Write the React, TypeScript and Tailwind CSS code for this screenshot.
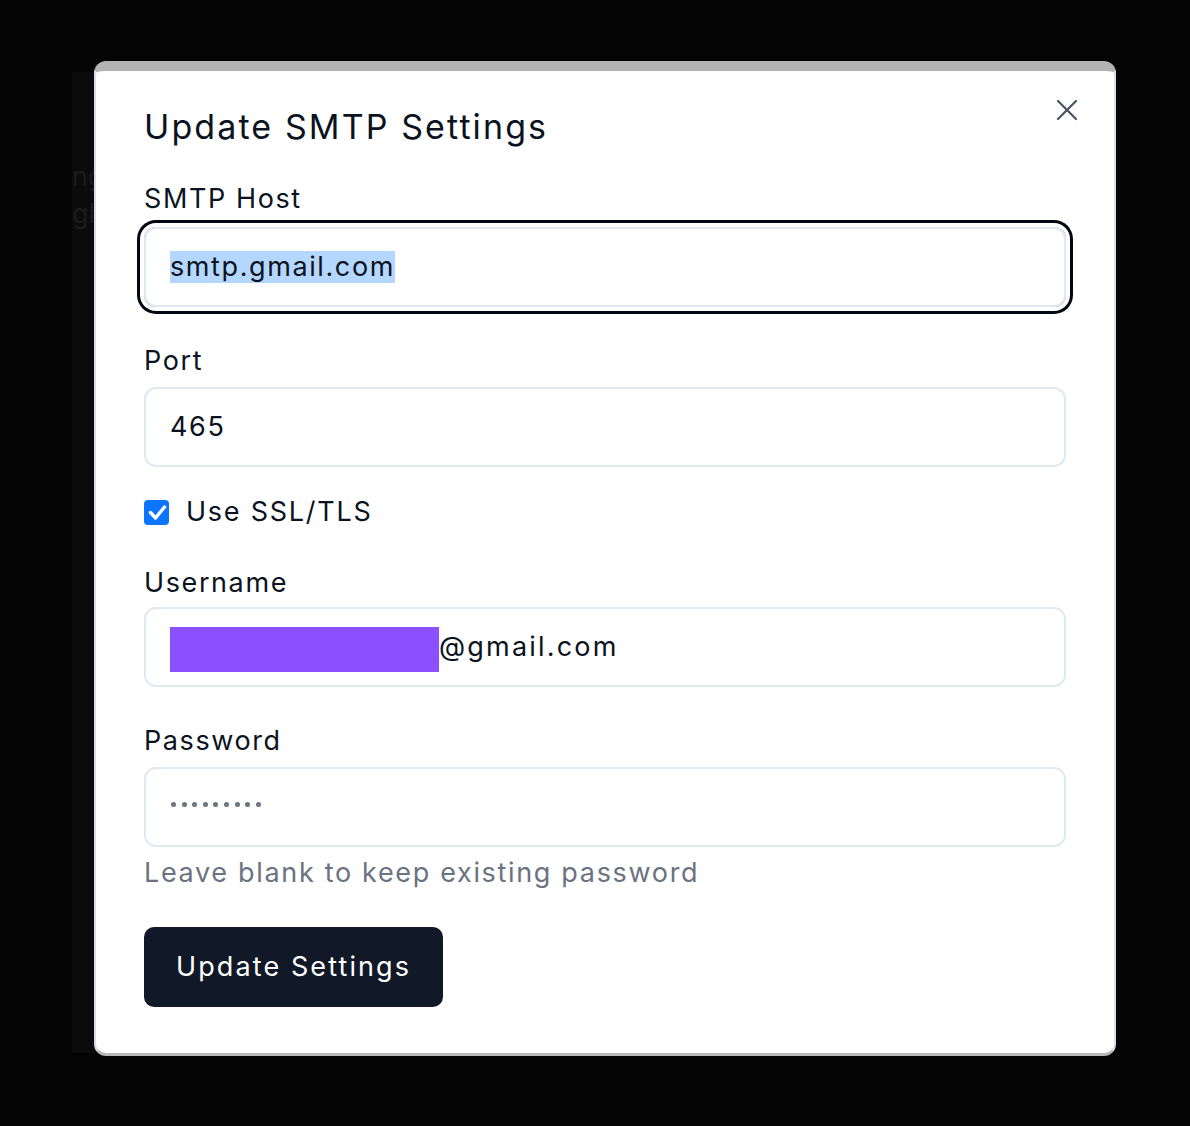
import { X } from "lucide-react";

const font = "font-['Inter','Noto_Sans',sans-serif]";

const Label = ({ text, className = "" }: { text: string; className?: string }) => (
  <div className={`h-8 text-[27px] leading-8 text-[#0b1220] tracking-[1.6px] ${className}`}>{text}</div>
);

const Field = ({ children, className = "" }: { children: React.ReactNode; className?: string }) => (
  <div
    className={`flex h-20 items-center rounded-xl border-2 border-[#e2e8f0] bg-white px-6 text-[27px] leading-8 text-[#0b1220] tracking-[1.6px] ${className}`}
  >
    {children}
  </div>
);

export default function App() {
  return (
    <div className={`relative h-[1126px] w-full overflow-hidden bg-[#040404] ${font}`}>
      {/* page behind the overlay */}
      <div className="absolute left-[72px] top-[72px] h-[981px] w-[1000px] bg-[#0b0b0b]">
        <div className="mt-[86px] text-[27px] leading-[37px] text-[#1b1b1b]">
          <div>ng</div>
          <div>gh</div>
        </div>
      </div>

      <div className="absolute left-[94px] top-[61px] w-[1022px] rounded-xl border-2 border-[#d9dee6] border-t-[10px] border-t-[#b3b3b3] border-b-[3px] border-b-[#b9b9b9] bg-white px-12 pb-[46px] pt-9">
        <button className="absolute right-[29px] top-[21px] text-[#4b5563]">
          <X size={36} strokeWidth={1.5} />
        </button>

        <h2 className="h-10 text-[34px] leading-10 text-[#0b1220] tracking-[2.1px]">Update SMTP Settings</h2>

        <Label text="SMTP Host" className="mt-9" />
        <div className="mt-3 rounded-xl ring-[3px] ring-[#030712] ring-offset-[4px] ring-offset-white">
          <Field>
            <span className="bg-[#b4d7ff] leading-8">smtp.gmail.com</span>
          </Field>
        </div>

        <Label text="Port" className="mt-[38px]" />
        <Field className="mt-[10px]">465</Field>

        <label className="mt-[29px] flex h-8 items-center gap-[17px]">
          <span className="flex h-[25px] w-[25px] items-center justify-center rounded-[4px] bg-[#0b75ff]">
            <svg width="24" height="24" viewBox="0 0 24 24" fill="none">
              <path d="M5.5 12.5l5 5.5L19.5 7" stroke="white" strokeWidth="3.4" strokeLinecap="round" strokeLinejoin="round" />
            </svg>
          </span>
          <span className="text-[27px] leading-8 text-[#0b1220] tracking-[1.75px]">Use SSL/TLS</span>
        </label>

        <Label text="Username" className="mt-[39px]" />
        <Field className="mt-2">
          <span className="mt-[5px] h-[45px] w-[269px] bg-[#8b50ff]" />
          <span className="tracking-[2.2px]">@gmail.com</span>
        </Field>

        <Label text="Password" className="mt-[38px]" />
        <Field className="mt-[10px]">
          <span className="flex -translate-y-[3px] gap-[5.6px] pl-[1px]">
            {Array.from({ length: 9 }).map((_, i) => (
              <span key={i} className="h-[5px] w-[5px] rounded-full bg-[#6b7280]" />
            ))}
          </span>
        </Field>

        <p className="mt-[10px] h-8 text-[27px] leading-8 text-[#6b7280] tracking-[1.67px]">
          Leave blank to keep existing password
        </p>

        <button className="mt-[38px] h-20 rounded-[10px] bg-[#111827] px-[32px] text-[27px] text-white tracking-[2.1px]">
          Update Settings
        </button>
      </div>
    </div>
  );
}
